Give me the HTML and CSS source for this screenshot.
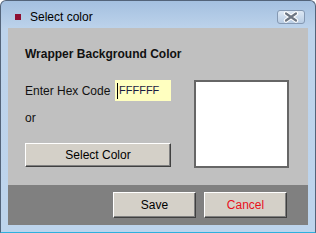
FILE: index.html
```html
<!DOCTYPE html>
<html lang="en">
<head>
  <meta charset="UTF-8" />
  <title>Select color</title>
  <link rel="stylesheet" href="styles.css">
</head>
<body>
  <div class="window">
    <div class="titlebar">
      <span class="app-icon"></span>
      <span class="title">Select color</span>
      <button class="close" type="button" aria-label="Close">
        <svg width="28" height="14" viewBox="0 0 28 14">
          <path d="M9 3.5 L19 10.5 M19 3.5 L9 10.5" stroke="#fff" stroke-width="4.5" stroke-linecap="round" fill="none"/>
          <path d="M9 3.5 L19 10.5 M19 3.5 L9 10.5" stroke="#6d7683" stroke-width="2.2" stroke-linecap="round" fill="none"/>
        </svg>
      </button>
    </div>

    <div class="main">
      <h3>Wrapper Background Color</h3>
      <div class="row">
        <div class="left">
          <div class="hex-line">
            <label for="hex">Enter Hex Code</label>
            <div class="hex-field" id="hex"><span class="caret"></span>FFFFFF</div>
          </div>
          <div class="or">or</div>
          <button class="btn wide" type="button">Select Color</button>
        </div>
        <div class="preview"></div>
      </div>
    </div>

    <div class="footer">
      <button class="btn" type="button">Save</button>
      <button class="btn cancel" type="button">Cancel</button>
    </div>
  </div>
</body>
</html>
```

FILE: styles.css
```css
body {
  margin: 0;
  font-family: "Liberation Sans", Arial, sans-serif;
  font-size: 12px;
  color: #111;
}
.window {
  width: 316px;
  height: 233px;
  box-sizing: border-box;
  border: 1px solid #53647a;
  border-bottom-color: #2eb0de;
  border-radius: 6px 6px 0 0;
  background: linear-gradient(#a4c0e0, #bdd3eb 28px, #bdd4ec);
  padding: 0 7px 7px;
  display: flex;
  flex-direction: column;
}
.titlebar {
  height: 27px;
  box-sizing: border-box;
  padding-top: 5px;
  display: flex;
  align-items: center;
}
.app-icon {
  width: 6px;
  height: 6px;
  background-color: #8e0f32;
  margin-left: 7px;
}
.title {
  margin-left: 9px;
  font-size: 12px;
  line-height: 14px;
  color: #000;
}
.close {
  margin-left: auto;
  margin-right: 3px;
  width: 28px;
  height: 14px;
  padding: 0;
  border: 1px solid #8599b3;
  border-radius: 3px;
  background: linear-gradient(#dde8f4, #b9cde4);
  display: flex;
}
.close svg {
  margin: -1px;
}
.main {
  background-color: #c0c0c0;
  height: 157px;
  box-sizing: border-box;
  padding: 19px 0 0 17px;
}
h3 {
  margin: 0 0 19px;
  font-size: 12px;
  line-height: 14px;
  font-weight: bold;
}
.row {
  display: flex;
  gap: 23px;
}
.left {
  width: 146px;
}
.hex-line {
  display: flex;
  align-items: center;
  height: 21px;
}
.hex-line label {
  width: 90px;
}
.hex-field {
  width: 56px;
  height: 21px;
  box-sizing: border-box;
  background-color: #ffffc0;
  font-size: 11px;
  line-height: 21px;
  padding-left: 2px;
  color: #1a1a40;
  display: flex;
  align-items: center;
}
.caret {
  width: 1px;
  height: 16px;
  background-color: #000;
  margin-right: 1px;
}
.or {
  margin-top: 10px;
  line-height: 14px;
}
.btn {
  width: 83px;
  height: 26px;
  padding: 0;
  font-family: "Liberation Sans", Arial, sans-serif;
  font-size: 12px;
  color: #000;
  background-color: #d4d0c8;
  border: 1px solid;
  border-color: #fff #404040 #404040 #fff;
  box-shadow: inset -1px -1px #808080;
}
.btn.wide {
  width: 146px;
  height: 24px;
  margin-top: 18px;
}
.btn.cancel {
  color: #e8101c;
}
.preview {
  width: 95px;
  height: 88px;
  box-sizing: border-box;
  background-color: #fff;
  border: 2px solid #666;
}
.footer {
  height: 40px;
  box-sizing: border-box;
  background-color: #808080;
  display: flex;
  justify-content: flex-end;
  gap: 8px;
  padding: 7px 21px 0 0;
}
```
